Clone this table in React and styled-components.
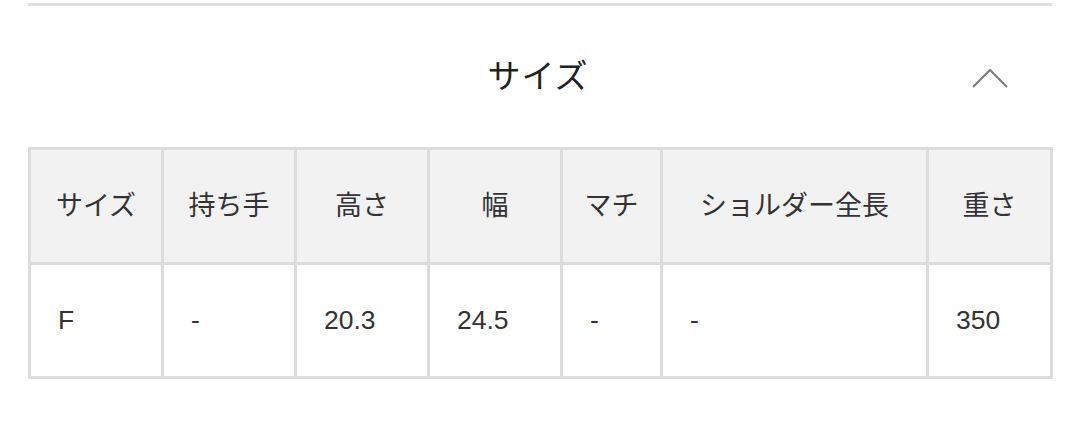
import styled, { createGlobalStyle } from "styled-components";

const GlobalStyle = createGlobalStyle`
  html, body {
    margin: 0;
    padding: 0;
    background: #fff;
  }
  body {
    font-family: "Liberation Sans", "Noto Sans CJK JP", sans-serif;
    color: #333;
  }
`;

const columns = [
  { label: "サイズ", width: 133, value: "F" },
  { label: "持ち手", width: 133, value: "-" },
  { label: "高さ", width: 133, value: "20.3" },
  { label: "幅", width: 133, value: "24.5" },
  { label: "マチ", width: 100, value: "-" },
  { label: "ショルダー全長", width: 266, value: "-" },
  { label: "重さ", width: 124, value: "350" },
];

function App() {
  return (
    <Page>
      <GlobalStyle />
      <Divider />
      <Header>
        <span />
        <Title>サイズ</Title>
        <Toggle aria-label="閉じる">
          <svg width="36" height="20" viewBox="0 0 36 20" fill="none">
            <path d="M1 19 L18 2 L35 19" stroke="#7a7a7a" strokeWidth="2" />
          </svg>
        </Toggle>
      </Header>
      <Table>
        <colgroup>
          {columns.map((c) => (
            <col key={c.label} style={{ width: c.width }} />
          ))}
        </colgroup>
        <thead>
          <tr>
            {columns.map((c) => (
              <HeadCell key={c.label}>{c.label}</HeadCell>
            ))}
          </tr>
        </thead>
        <tbody>
          <tr>
            {columns.map((c) => (
              <BodyCell key={c.label}>{c.value}</BodyCell>
            ))}
          </tr>
        </tbody>
      </Table>
    </Page>
  );
}

export default App;

const Page = styled.div`
  width: 1080px;
  height: 434px;
  box-sizing: border-box;
  padding: 3px 28px 0;
  overflow: hidden;
`;
const Divider = styled.div`
  height: 3px;
  background-color: #dedede;
`;
const Header = styled.div`
  display: grid;
  grid-template-columns: 1fr auto 1fr;
  align-items: center;
  height: 139px;
  padding-bottom: 2px;
`;
const Title = styled.h2`
  margin: 0;
  font-family: "Noto Sans CJK JP", sans-serif;
  font-weight: 400;
  font-size: 33px;
  color: #222;
  letter-spacing: 1px;
  transform: translate(-2px, -2px);
`;
const Toggle = styled.div`
  justify-self: end;
  display: flex;
  margin-right: 44px;
  margin-top: 4px;
`;
const Table = styled.table`
  width: 1024px;
  border-collapse: collapse;
  table-layout: fixed;
  font-size: 26.5px;
  color: #333;
  border: 3px solid #dcdcdc;
`;
const HeadCell = styled.th`
  height: 106px;
  padding: 0 0 6px;
  font-weight: 400;
  text-align: center;
  background-color: #f2f2f2;
  border: 3px solid #dcdcdc;
  font-family: "Noto Sans CJK JP", sans-serif;
  font-size: 27px;
`;
const BodyCell = styled.td`
  height: 111px;
  padding: 0 0 0 27px;
  text-align: left;
  background-color: #fff;
  border: 3px solid #dcdcdc;
`;
